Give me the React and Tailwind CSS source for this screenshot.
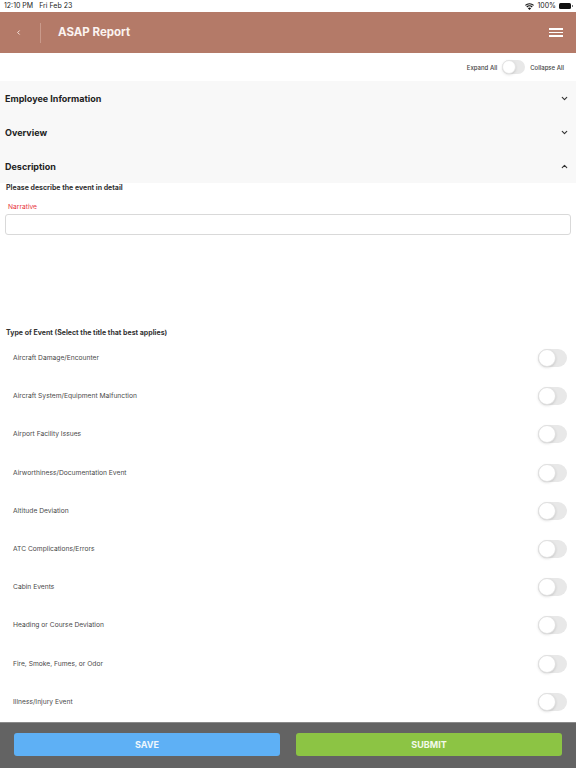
import React from "react";
import { ChevronDown, ChevronUp, ChevronLeft } from "lucide-react";

const eventTypes = [
  "Aircraft Damage/Encounter",
  "Aircraft System/Equipment Malfunction",
  "Airport Facility Issues",
  "Airworthiness/Documentation Event",
  "Altitude Deviation",
  "ATC Complications/Errors",
  "Cabin Events",
  "Heading or Course Deviation",
  "Fire, Smoke, Fumes, or Odor",
  "Illness/Injury Event",
];

const Toggle = ({ small }) => (
  <div
    className={
      small
        ? "w-[23px] h-[14px] rounded-full bg-[#e8e8e8] flex items-center"
        : "w-[29px] h-[18px] rounded-full bg-[#e8e8e8] flex items-center"
    }
  >
    <div
      className={
        small
          ? "w-[14px] h-[14px] rounded-full bg-white border border-[#e4e4e4] shadow-sm"
          : "w-[18px] h-[18px] rounded-full bg-white border border-[#e0e0e0] shadow-sm"
      }
    ></div>
  </div>
);

const Section = ({ title, open }) => (
  <div className="h-[34px] flex items-center justify-between pl-[5px] pr-[7px]">
    <span className="pt-px text-[9px] font-bold text-[#222222]">{title}</span>
    {open ? (
      <ChevronUp size={9} strokeWidth={3} className="text-[#333333]" />
    ) : (
      <ChevronDown size={9} strokeWidth={3} className="text-[#333333]" />
    )}
  </div>
);

const StatusBar = () => (
  <div className="h-[12px] flex items-center justify-between pl-[4px] pr-[3px] text-[7px] text-[#222222] bg-white">
    <div className="flex gap-[6px]">
      <span>12:10 PM</span>
      <span>Fri Feb 23</span>
    </div>
    <div className="flex items-center gap-[3px]">
      <svg width="9" height="7" viewBox="0 0 18 14" fill="#111111">
        <path d="M9 14 L5.8 10.4 A4.6 4.6 0 0 1 12.2 10.4 Z" />
        <path d="M4.4 8.9 L2.7 7 A9 9 0 0 1 15.3 7 L13.6 8.9 A6.6 6.6 0 0 0 4.4 8.9 Z" />
        <path d="M1.6 5.7 L0 3.9 A13 13 0 0 1 18 3.9 L16.4 5.7 A10.6 10.6 0 0 0 1.6 5.7 Z" />
      </svg>
      <span>100%</span>
      <div className="flex items-center gap-px">
        <div className="w-[12px] h-[6px] rounded-[1.5px] bg-[#111111]"></div>
        <div className="w-px h-[2px] bg-[#777777]"></div>
      </div>
    </div>
  </div>
);

const Header = () => (
  <div className="h-[41px] bg-[#b47a68] flex items-center">
    <div className="w-[41px] h-[20px] flex items-center justify-center border-r border-[#c99a8b] pr-[4px]">
      <ChevronLeft size={7} strokeWidth={3} className="text-[#fbeee9]" />
    </div>
    <span className="ml-[17px] pt-px text-[11.5px] font-bold text-[#fbf3f0]">ASAP Report</span>
    <div className="ml-auto mr-[13px] w-[14px] flex flex-col gap-[2px]">
      <div className="h-[1.5px] bg-white"></div>
      <div className="h-[1.5px] bg-white"></div>
      <div className="h-[1.5px] bg-white"></div>
    </div>
  </div>
);

const App = () => {
  return (
    <div className="w-[576px] h-[768px] overflow-hidden flex flex-col bg-white antialiased font-['Inter','Liberation_Sans',sans-serif]">
      <StatusBar />
      <Header />

      <div className="flex-1 overflow-hidden">
        <div className="h-[28px] flex items-center justify-end pr-[12px] text-[6px] font-medium text-[#444444]">
          <span>Expand All</span>
          <div className="mx-[5px]">
            <Toggle small />
          </div>
          <span>Collapse All</span>
        </div>

        <div className="bg-[#f8f8f8]">
          <Section title="Employee Information" />
          <Section title="Overview" />
          <Section title="Description" open />
        </div>

        <div className="pl-[6px] text-[7px] leading-[9px] font-bold text-[#333333]">
          Please describe the event in detail
        </div>
        <div className="pl-[8px] mt-[11px] text-[6.7px] leading-[9px] text-[#e8333c]">Narrative</div>
        <div className="mx-[5px] mt-[2px] h-[21px] rounded-[3px] bg-white border border-[#d9d9d9]"></div>

        <div className="pl-[6px] mt-[93px] text-[7px] leading-[9px] font-bold text-[#333333]">
          Type of Event (Select the title that best applies)
        </div>

        <div className="mt-[2px]">
          {eventTypes.map((name) => (
            <div key={name} className="h-[38.2px] flex items-center justify-between pl-[13px] pr-[9px]">
              <span className="text-[6.7px] text-[#4a4a4a]">{name}</span>
              <Toggle />
            </div>
          ))}
        </div>
      </div>

      <div className="h-[46px] bg-[#636363] border-t border-[#8a8a8a] flex gap-[16px] pl-[14px] pr-[14px] pt-[10px]">
        <button className="flex-1 h-[23px] rounded-[3px] bg-[#5eb0f5] text-[9px] font-bold text-[#eef6fd]">
          SAVE
        </button>
        <button className="flex-1 h-[23px] rounded-[3px] bg-[#8cc444] text-[9px] font-bold text-[#f3f9ea]">
          SUBMIT
        </button>
      </div>
    </div>
  );
};

export default App;
